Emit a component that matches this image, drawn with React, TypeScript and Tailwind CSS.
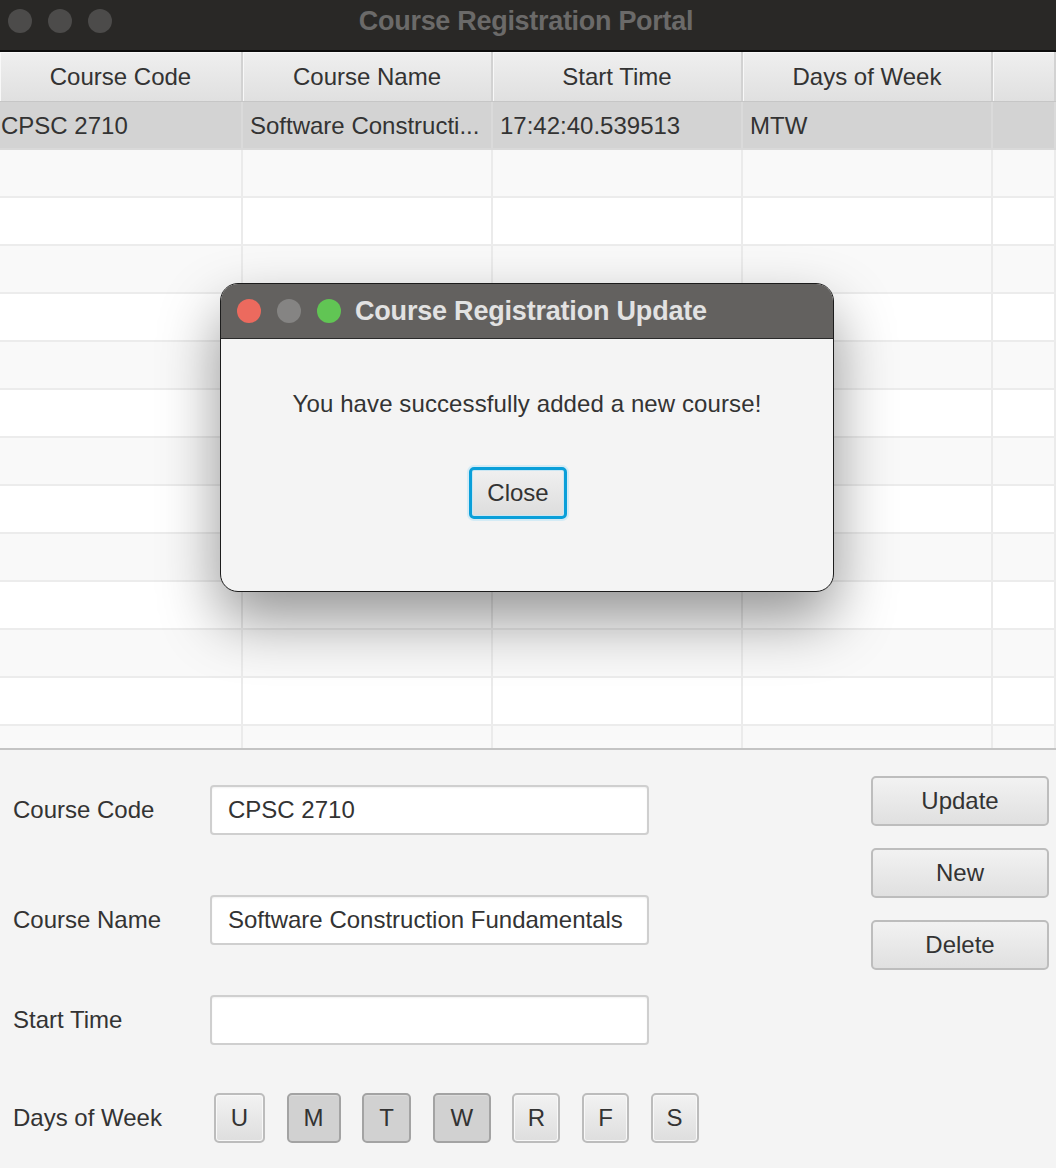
import React from 'react';

const FONT = { fontFamily: '"Liberation Sans", Arial, sans-serif' };

const columns = ['Course Code', 'Course Name', 'Start Time', 'Days of Week', ''];
const colWidths = ['w-[243px]', 'w-[250px]', 'w-[250px]', 'w-[250px]', 'flex-1'];

const courses = [{ code: 'CPSC 2710', name: 'Software Constructi...', start: '17:42:40.539513', days: 'MTW' }];

const days = [
  { label: 'U', on: false, w: 'w-[51px]' },
  { label: 'M', on: true, w: 'w-[54px]' },
  { label: 'T', on: true, w: 'w-[49px]' },
  { label: 'W', on: true, w: 'w-[58px]' },
  { label: 'R', on: false, w: 'w-[48px]' },
  { label: 'F', on: false, w: 'w-[47px]' },
  { label: 'S', on: false, w: 'w-[48px]' },
];

const TableHeader: React.FC = () => (
  <div className="flex h-[50px] border-b border-[#c6c6c6]">
    {columns.map((c, i) => (
      <div
        key={i}
        className={`${colWidths[i]} flex items-center justify-center border-r-2 border-[#d2d2d2] bg-gradient-to-b from-[#efefef] to-[#e0e0e0] shadow-[inset_1px_1px_0_#f8f8f8] text-[24px] text-[#333]`}
      >
        {c}
      </div>
    ))}
  </div>
);

const TableRow: React.FC<{ index: number; cells?: string[]; selected?: boolean; partial?: boolean }> = ({ index, cells, selected, partial }) => {
  const bg = selected ? 'bg-[#d3d3d3]' : index % 2 === 1 ? 'bg-[#f9f9f9]' : 'bg-white';
  return (
    <div className={`flex ${partial ? 'h-[22px]' : 'h-[48px] border-b-2'} ${selected ? 'border-[#d9d9d9]' : 'border-[#ececec]'} ${bg}`}>
      {columns.map((_, i) => (
        <div
          key={i}
          className={`${colWidths[i]} flex items-center pt-[2px] border-r-2 ${selected ? 'border-[#dadada]' : 'border-[#ebebeb]'} ${i === 0 ? 'pl-[1px]' : 'pl-[7px]'} text-[24px] text-[#333] whitespace-nowrap overflow-hidden`}
        >
          {cells ? cells[i] : ''}
        </div>
      ))}
    </div>
  );
};

const Dot: React.FC<{ color: string }> = ({ color }) => (
  <span className={`block w-[24px] h-[24px] rounded-full ${color}`} />
);

const Modal: React.FC = () => (
  <div className="absolute left-[220px] top-[283px] w-[614px] h-[309px] rounded-[18px] border border-[#1c1c1c] bg-[#f4f4f4] overflow-hidden shadow-[0_28px_60px_rgba(0,0,0,0.42)]">
    <div className="flex items-center h-[55px] bg-[#63615f] border-b border-[#2a2a2a] pl-[16px]">
      <div className="flex gap-[16px]">
        <Dot color="bg-[#ec6a5e]" />
        <Dot color="bg-[#858483]" />
        <Dot color="bg-[#61c554]" />
      </div>
      <span className="ml-[14px] text-[27px] font-bold text-[#e2e2e2] tracking-[-0.2px]">Course Registration Update</span>
    </div>
    <div className="flex flex-col items-center">
      <p className="mt-[53px] text-[24px] text-[#333] leading-none tracking-[0.1px]">You have successfully added a new course!</p>
      <button className="mt-[51px] mr-[18px] h-[52px] w-[98px] rounded-[5px] border-[3px] border-[#0a9fd9] bg-gradient-to-b from-[#f0f0f0] to-[#dddddd] text-[24px] text-[#333] shadow-[inset_0_0_0_1px_#c9e6f3,0_0_0_2px_#d4ebf5]">
        Close
      </button>
    </div>
  </div>
);

const TextField: React.FC<{ value: string }> = ({ value }) => (
  <div className="w-[439px] h-[50px] flex items-center px-[16px] rounded-[4px] border-2 border-[#cfcfcf] bg-white shadow-[inset_0_1px_2px_rgba(0,0,0,0.06)] text-[24px] text-[#333] whitespace-nowrap overflow-hidden">
    {value}
  </div>
);

const ActionButton: React.FC<{ label: string }> = ({ label }) => (
  <button className="w-[178px] h-[50px] rounded-[5px] border-2 border-[#bdbdbd] bg-gradient-to-b from-[#f2f2f2] to-[#e0e0e0] text-[24px] text-[#333]">
    {label}
  </button>
);

const DayToggle: React.FC<{ label: string; on: boolean; w: string }> = ({ label, on, w }) => (
  <button
    className={`${w} h-[50px] rounded-[5px] border-2 text-[24px] text-[#333] ${
      on
        ? 'border-[#a3a3a3] bg-[#d1d1d1] shadow-[inset_0_1px_0_#dcdcdc]'
        : 'border-[#bcbcbc] bg-gradient-to-b from-[#f2f2f2] to-[#dedede] shadow-[inset_0_0_0_1px_#f8f8f8]'
    }`}
  >
    {label}
  </button>
);

const App: React.FC = () => {
  return (
    <div className="w-[1056px] h-[1168px] overflow-hidden bg-[#f4f4f4] relative" style={FONT}>
      {/* Window title bar */}
      <div className="relative flex items-center justify-center h-[52px] bg-[#292826] border-b-2 border-[#0d0d0d]">
        <div className="absolute left-[8px] top-[9px] flex gap-[16px]">
          <Dot color="bg-[#4c4b4a]" />
          <Dot color="bg-[#4c4b4a]" />
          <Dot color="bg-[#4c4b4a]" />
        </div>
        <span className="text-[27px] font-bold text-[#6b6a69] tracking-[-0.3px] -mt-[8px] ml-[-4px]">Course Registration Portal</span>
      </div>

      {/* Table */}
      <div className="h-[698px] bg-white border-b-2 border-[#c4c4c4] overflow-hidden">
        <TableHeader />
        {courses.map((c, i) => (
          <TableRow key={i} index={i} selected cells={[c.code, c.name, c.start, c.days, '']} />
        ))}
        {Array.from({ length: 12 }).map((_, i) => (
          <TableRow key={`e${i}`} index={i + 1} />
        ))}
        <TableRow index={13} partial />
      </div>

      {/* Form */}
      <div className="flex pl-[13px] pr-[7px]">
        <div className="flex-1">
          <div className="flex items-center mt-[35px]">
            <span className="w-[197px] text-[24px] text-[#333]">Course Code</span>
            <TextField value="CPSC 2710" />
          </div>
          <div className="flex items-center mt-[60px]">
            <span className="w-[197px] text-[24px] text-[#333]">Course Name</span>
            <TextField value="Software Construction Fundamentals" />
          </div>
          <div className="flex items-center mt-[50px]">
            <span className="w-[197px] text-[24px] text-[#333]">Start Time</span>
            <TextField value="" />
          </div>
          <div className="flex items-center mt-[48px]">
            <span className="w-[201px] text-[24px] text-[#333]">Days of Week</span>
            <div className="flex gap-[21.6px]">
              {days.map((d) => (
                <DayToggle key={d.label} label={d.label} on={d.on} w={d.w} />
              ))}
            </div>
          </div>
        </div>
        <div className="flex flex-col gap-[22px] mt-[26px]">
          <ActionButton label="Update" />
          <ActionButton label="New" />
          <ActionButton label="Delete" />
        </div>
      </div>

      <Modal />
    </div>
  );
};

export default App;
